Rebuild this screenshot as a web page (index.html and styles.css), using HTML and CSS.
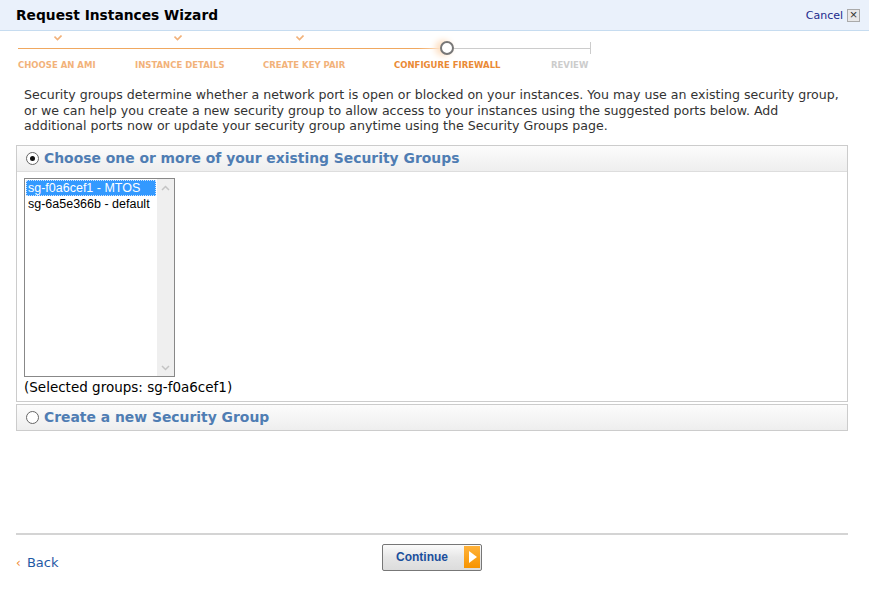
FILE: index.html
```html
<!DOCTYPE html>
<html>
<head>
<meta charset="utf-8">
<title>Request Instances Wizard</title>
<link rel="stylesheet" href="styles.css">
</head>
<body>
<!--标题栏-->
<div class="head">
  <h1>Request Instances Wizard</h1>
  <a class="cancel" href="#">Cancel <span class="x">&#215;</span></a>
</div>

<!--步骤-->
<div class="steps">
  <div class="row checks">
    <span class="c1"><svg width="8" height="6" viewBox="0 0 8 6"><polyline points="0.5,1.5 3.5,4.5 7.5,0.5" fill="none" stroke="#f2b27a" stroke-width="1.6"/></svg></span>
    <span class="c2"><svg width="8" height="6" viewBox="0 0 8 6"><polyline points="0.5,1.5 3.5,4.5 7.5,0.5" fill="none" stroke="#f2b27a" stroke-width="1.6"/></svg></span>
    <span class="c3"><svg width="8" height="6" viewBox="0 0 8 6"><polyline points="0.5,1.5 3.5,4.5 7.5,0.5" fill="none" stroke="#f2b27a" stroke-width="1.6"/></svg></span>
  </div>
  <div class="track">
    <span class="done"></span>
    <span class="dot"></span>
    <span class="todo"></span>
    <span class="tick"></span>
  </div>
  <div class="row labels">
    <span>CHOOSE AN AMI</span>
    <span>INSTANCE DETAILS</span>
    <span>CREATE KEY PAIR</span>
    <span class="cur">CONFIGURE FIREWALL</span>
    <span class="next">REVIEW</span>
  </div>
</div>

<p class="intro">Security groups determine whether a network port is open or blocked on your instances. You may use an existing security group, or we can help you create a new security group to allow access to your instances using the suggested ports below. Add additional ports now or update your security group anytime using the Security Groups page.</p>

<!--已有安全组-->
<div class="panel">
  <div class="panel-hd"><span class="radio on"></span>Choose one or more of your existing Security Groups</div>
  <div class="panel-bd">
    <div class="listbox">
      <ul>
        <li class="sel">sg-f0a6cef1 - MTOS</li>
        <li>sg-6a5e366b - default</li>
      </ul>
      <div class="scroll">
        <svg width="9" height="6" viewBox="0 0 9 6"><polyline points="1,5 4.5,1.5 8,5" fill="none" stroke="#c4c4c4" stroke-width="1.5"/></svg>
        <svg width="9" height="6" viewBox="0 0 9 6"><polyline points="1,1 4.5,4.5 8,1" fill="none" stroke="#c4c4c4" stroke-width="1.5"/></svg>
      </div>
    </div>
    <p class="picked">(Selected groups: sg-f0a6cef1)</p>
  </div>
</div>

<!--新建安全组-->
<div class="panel">
  <div class="panel-hd last"><span class="radio"></span>Create a new Security Group</div>
</div>

<!--底部-->
<div class="foot">
  <a class="back" href="#"><span>&#8249;</span> Back</a>
  <button class="go">Continue <span class="arrow"></span></button>
</div>
</body>
</html>
```

FILE: styles.css
```css
/*清除默认样式*/
body,div,ul,p,li,h1{padding:0; margin:0;}
li{list-style:none;}
body{background:#fff; font-family:"DejaVu Sans", Verdana, sans-serif; color:#333; width:869px; height:590px; overflow:hidden;}
a{text-decoration:none;}

/*标题栏*/
.head{height:30px; background:#eaf1fb; border-bottom:1px solid #c6dcf0; display:flex; align-items:center; justify-content:space-between; padding:0 9px 0 16px;}
.head h1{font-size:13.8px; font-weight:bold; color:#000;}
.cancel{font-size:11px; color:#1a2a8c; display:flex; align-items:center; gap:4px; margin-top:1px;}
.cancel .x{width:11px; height:11px; border:1px solid #aaa; background:#e8e8e8; color:#333; font-size:13px; line-height:10px; text-align:center; font-family:"Liberation Sans", Arial, sans-serif;}

/*步骤*/
.steps{margin-left:18px; width:573px;}
.row{display:grid; grid-template-columns:117px 128px 131px 157px auto;}
.checks{height:6px; margin-top:4px;}
.checks span{display:block; height:6px;}
.checks svg{display:block;}
.c1{padding-left:36px;}
.c2{padding-left:39px;}
.c3{padding-left:33px;}
.track{display:flex; align-items:center; height:14px;}
.done{width:422px; height:1px; background:linear-gradient(to right,#f0a860 0,#f0a860 400px,#fbd9b8 422px);}
.dot{width:14px; height:14px; box-sizing:border-box; border:2px solid #777; border-radius:50%; background:#fff; box-shadow:-4px 0 6px 1px #fde0c4;}
.todo{width:136px; height:1px; background:#ccc;}
.tick{width:1px; height:12px; background:#ccc;}
.labels{margin-top:4px; font-size:8.5px; font-weight:bold; line-height:12px; color:#f2b27a;}
.labels .cur{color:#ea8a35;}
.labels .next{color:#ccc;}

/*说明*/
.intro{margin:16px 0 11px 24px; width:817px; font-size:12.6px; line-height:15.5px; color:#333;}

/*面板*/
.panel{margin:0 21px 2px 16px; border:1px solid #ccc;}
.panel-hd{height:25px; display:flex; align-items:center; padding-left:9px; background:linear-gradient(#fcfcfc,#eeeeee); border-bottom:1px solid #ddd; font-size:13.9px; font-weight:bold; color:#4f7db3;}
.panel-hd.last{border-bottom:0;}
.radio{width:11px; height:11px; border:1px solid #666; border-radius:50%; background:#fff; margin-right:5px; position:relative; box-sizing:content-box;}
.radio.on::after{content:""; position:absolute; left:3px; top:3px; width:5px; height:5px; border-radius:50%; background:#111;}
.panel-bd{padding:6px 7px 6px 7px;}
.listbox{width:149px; height:197px; border:1px solid #888; display:flex; font-family:"Liberation Sans", Arial, sans-serif; font-size:12.5px; color:#000;}
.listbox ul{flex:1; padding:1px;}
.listbox li{height:16px; line-height:16px; padding-left:2px;}
.listbox li.sel{background:#3399ff; color:#fff; outline:1px dotted #cfe4ff; outline-offset:-1px;}
.scroll{width:17px; background:#efefef; display:flex; flex-direction:column; justify-content:space-between; align-items:center; padding:6px 0 5px;}
.scroll svg{display:block;}
.picked{font-size:13.5px; color:#000; margin-top:2px; line-height:16px;}

/*底部*/
.foot{margin:102px 21px 0 16px; border-top:2px solid #d4d4d4; height:60px; display:flex; align-items:center; position:relative;}
.back{font-size:13px; color:#1f5aa5; margin-top:-5px;}
.back span{color:#f08a30; font-size:12px; margin-right:2px;}
.go{position:absolute; left:366px; top:9px; width:100px; height:27px; border:1px solid #777; border-radius:2px; background:linear-gradient(#fbfbfb,#e6e6e6 50%,#dcdcdc); font-family:"Liberation Sans", Arial, sans-serif; font-size:12px; font-weight:bold; color:#1b4f9c; text-align:left; padding:0 0 0 13px; display:flex; align-items:center; gap:16px;}
.arrow{width:16px; height:22px; background:linear-gradient(#ffb23a,#f79400); position:relative;}
.arrow::after{content:""; position:absolute; left:5px; top:5px; border-left:8px solid #fff; border-top:6px solid transparent; border-bottom:6px solid transparent;}
```
